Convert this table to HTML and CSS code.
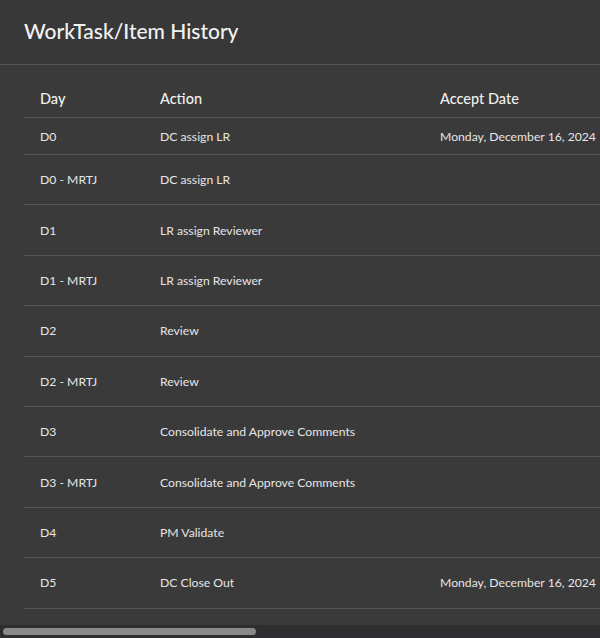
FILE: index.html
```html
<!DOCTYPE html>
<html>
<head>
<meta charset="utf-8">
<link rel="stylesheet" href="styles.css">
</head>
<body>
<div class="dialog">
  <div class="dialog-title">WorkTask/Item History</div>
  <div class="dialog-content">
    <table class="history">
      <thead>
        <tr><th class="c-day">Day</th><th class="c-action">Action</th><th class="c-date">Accept Date</th><th class="c-rest"></th></tr>
      </thead>
      <tbody>
        <tr class="first"><td>D0</td><td>DC assign LR</td><td>Monday, December 16, 2024</td><td></td></tr>
        <tr><td>D0 - MRTJ</td><td>DC assign LR</td><td></td><td></td></tr>
        <tr><td>D1</td><td>LR assign Reviewer</td><td></td><td></td></tr>
        <tr><td>D1 - MRTJ</td><td>LR assign Reviewer</td><td></td><td></td></tr>
        <tr><td>D2</td><td>Review</td><td></td><td></td></tr>
        <tr><td>D2 - MRTJ</td><td>Review</td><td></td><td></td></tr>
        <tr><td>D3</td><td>Consolidate and Approve Comments</td><td></td><td></td></tr>
        <tr><td>D3 - MRTJ</td><td>Consolidate and Approve Comments</td><td></td><td></td></tr>
        <tr><td>D4</td><td>PM Validate</td><td></td><td></td></tr>
        <tr><td>D5</td><td>DC Close Out</td><td>Monday, December 16, 2024</td><td></td></tr>
      </tbody>
    </table>
  </div>
  <div class="hscroll"><div class="hscroll-thumb"></div></div>
</div>
</body>
</html>
```
FILE: styles.css
```css
html, body {
  margin: 0;
  padding: 0;
  background: #3a3a3b;
}
body {
  font-family: "Lato", "Open Sans", sans-serif;
  color: #ececec;
}
.dialog {
  width: 600px;
  height: 638px;
  background: #3a3a3b;
  overflow: hidden;
  display: flex;
  flex-direction: column;
}
.dialog-title {
  height: 65px;
  flex: none;
  box-sizing: border-box;
  padding: 18px 24px 0;
  font-size: 21px;
  font-weight: 500;
  color: #f2f2f2;
  border-bottom: 1px solid #535355;
  background: #383839;
}
.dialog-content {
  flex: 1;
  min-height: 0;
  box-sizing: border-box;
  padding: 15px 24px 0;
  overflow: hidden;
}
.hscroll {
  flex: none;
  height: 13px;
  background: #2e2e30;
  display: flex;
  align-items: center;
  padding-left: 3px;
}
.hscroll-thumb {
  width: 253px;
  height: 7px;
  border-radius: 4px;
  background: #8a8a8a;
}
.history {
  border-collapse: collapse;
  width: 1380px;
}
.history th, .history td {
  text-align: left;
  padding: 0 16px;
  border-bottom: 1px solid #555557;
  white-space: nowrap;
}
.history th {
  height: 37px;
  font-size: 14.5px;
  font-weight: 500;
  color: #f0f0f0;
}
.history td {
  height: 49.4px;
  font-size: 12.2px;
  color: #e6e6e6;
}
.history tr.first td {
  height: 36px;
}
.c-day { width: 88px; }
.c-action { width: 248px; }
.c-date { width: 220px; }
```
